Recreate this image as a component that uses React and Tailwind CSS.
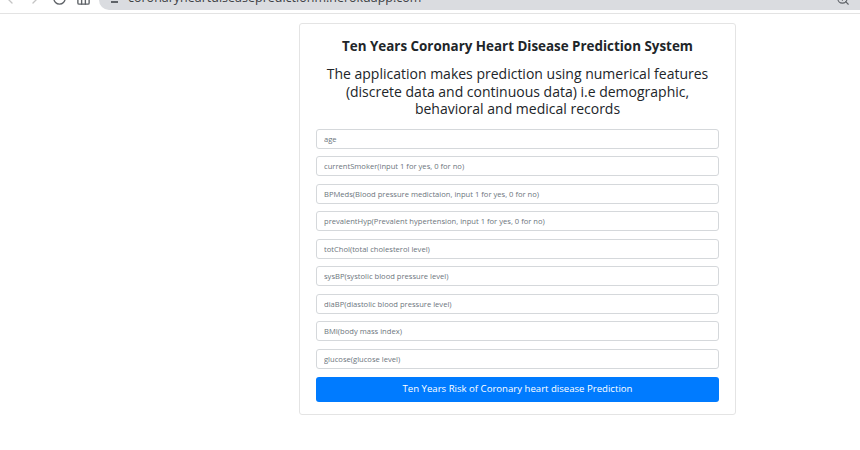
import { ChevronLeft, ChevronRight, RotateCw, Home, ZoomIn } from "lucide-react";

const fields = [
  "age",
  "currentSmoker(input 1 for yes, 0 for no)",
  "BPMeds(Blood pressure medictaion, input 1 for yes, 0 for no)",
  "prevalentHyp(Prevalent hypertension, input 1 for yes, 0 for no)",
  "totChol(total cholesterol level)",
  "sysBP(systolic blood pressure level)",
  "diaBP(diastolic blood pressure level)",
  "BMI(body mass index)",
  "glucose(glucose level)",
];

export default function App() {
  return (
    <div className="min-h-[450px] bg-white" style={{ fontFamily: '"Open Sans", "Noto Sans", sans-serif' }}>
      {/* browser chrome, cut off at top */}
      <div className="h-[14px] border-b border-[#e3e3e3] overflow-hidden">
        <div className="flex h-[11px] text-[#5f6368]">
          <div className="flex items-start gap-[9px] pl-[2px] -mt-[9px]">
            <ChevronLeft size={16} strokeWidth={2} className="text-[#c4c4c4]" />
            <ChevronRight size={16} strokeWidth={2} className="text-[#c4c4c4]" />
            <RotateCw size={15} strokeWidth={2.2} />
            <Home size={15} strokeWidth={2.2} />
          </div>
          <div className="ml-[8px] flex-1 h-[10px] bg-[#dadce0] rounded-bl-[14px] flex items-start pl-[12px] pr-[10px] overflow-hidden">
            <span className="w-[7px] h-[2px] bg-[#5f6368] mt-[1px]" />
            <span className="ml-[10px] text-[12.5px] leading-none text-[#3c4043] -mt-[8px]">
              coronaryheartdiseasepredictionm.herokuapp.com
            </span>
            <ZoomIn size={14} className="ml-auto -mt-[8px]" />
          </div>
        </div>
      </div>

      <div className="pl-[299px] pt-[9px]">
        <div className="w-[437px] border border-[#e4e4e4] rounded-[3px] px-[16px] pt-[13px] pb-[12px]">
          <h1 className="text-center text-[13.4px] leading-[18px] font-bold text-[#212529]">
            Ten Years Coronary Heart Disease Prediction System
          </h1>
          <p className="mt-[10px] text-center text-[14px] leading-[17.5px] text-[#212529]">
            The application makes prediction using numerical features (discrete data and continuous data) i.e demographic, behavioral and medical records
          </p>
          <div className="mt-[11px] flex flex-col gap-[7.5px]">
            {fields.map((f) => (
              <input
                key={f}
                placeholder={f}
                className="h-[20px] w-full border border-[#d5d8db] rounded-[3px] px-[7px] text-[7.6px] text-[#495057] placeholder:text-[#6c757d] outline-none"
              />
            ))}
          </div>
          <button className="mt-[8px] w-full h-[25px] bg-[#007bff] rounded-[3px] text-white text-[9.6px]">
            Ten Years Risk of Coronary heart disease Prediction
          </button>
        </div>
      </div>
    </div>
  );
}
